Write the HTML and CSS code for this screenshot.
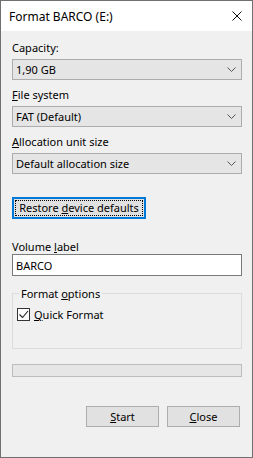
FILE: index.html
```html
<!DOCTYPE html>
<html lang="en">
<head>
    <meta charset="UTF-8">
    <title>Format BARCO (E:)</title>
    <link rel="stylesheet" href="styles.css">
</head>
<body>

    <div class="dialog">
        <!-- Title bar -->
        <div class="titlebar">
            <span class="title">Format BARCO (E:)</span>
            <svg class="close-x" width="10" height="10" viewBox="0 0 10 10">
                <path d="M0.5 0.5 L9.5 9.5 M9.5 0.5 L0.5 9.5" stroke="#111" stroke-width="1"/>
            </svg>
        </div>

        <div class="content">
            <label class="field-label">Capacity:</label>
            <div class="combo">
                <span>1,90 GB</span>
                <svg class="chevron" width="9" height="5" viewBox="0 0 9 5"><path d="M0.5 0.5 L4.5 4.5 L8.5 0.5" fill="none" stroke="#555"/></svg>
            </div>

            <label class="field-label"><u>F</u>ile system</label>
            <div class="combo">
                <span>FAT (Default)</span>
                <svg class="chevron" width="9" height="5" viewBox="0 0 9 5"><path d="M0.5 0.5 L4.5 4.5 L8.5 0.5" fill="none" stroke="#555"/></svg>
            </div>

            <label class="field-label"><u>A</u>llocation unit size</label>
            <div class="combo">
                <span>Default allocation size</span>
                <svg class="chevron" width="9" height="5" viewBox="0 0 9 5"><path d="M0.5 0.5 L4.5 4.5 L8.5 0.5" fill="none" stroke="#555"/></svg>
            </div>

            <div class="restore-row">
                <button class="btn btn-focus"><span class="focus-rect">Restore <u>d</u>evice defaults</span></button>
            </div>

            <label class="field-label">Volume <u>l</u>abel</label>
            <div class="textbox">BARCO</div>

            <fieldset class="group">
                <legend>Format <u>o</u>ptions</legend>
                <div class="check-row">
                    <span class="checkbox">
                        <svg width="11" height="11" viewBox="0 0 11 11"><path d="M1.5 5.5 L4.5 8.5 L10 2" fill="none" stroke="#222" stroke-width="1.1"/></svg>
                    </span>
                    <span><u>Q</u>uick Format</span>
                </div>
            </fieldset>

            <div class="progress"></div>

            <div class="actions">
                <button class="btn btn-action"><u>S</u>tart</button>
                <button class="btn btn-action"><u>C</u>lose</button>
            </div>
        </div>
    </div>

</body>
</html>
```

FILE: styles.css
```css
html, body {
    margin: 0;
    padding: 0;
}

body {
    font-family: "Noto Sans", "Liberation Sans", sans-serif;
    font-size: 11px;
    color: #000;
    width: 253px;
    height: 458px;
}

.dialog {
    box-sizing: border-box;
    width: 253px;
    height: 458px;
    border: 1px solid #707070;
    background-color: #f0f0f0;
    display: flex;
    flex-direction: column;
}

.titlebar {
    height: 30px;
    background-color: #ffffff;
    display: flex;
    align-items: center;
    justify-content: space-between;
    padding: 0 10px 0 8px;
}

.title {
    font-size: 12px;
    color: #000;
}

.close-x {
    display: block;
}

.content {
    display: flex;
    flex-direction: column;
    padding: 9px 10px 0 11px;
}

.field-label {
    display: block;
    line-height: 15px;
    height: 15px;
    margin-bottom: 4px;
}

.combo {
    box-sizing: border-box;
    height: 21px;
    border: 1px solid #adadad;
    background-color: #e5e5e5;
    display: flex;
    align-items: center;
    justify-content: space-between;
    padding: 0 5px 0 3px;
    margin-bottom: 7px;
}

.chevron {
    display: block;
}

.restore-row {
    margin-top: 16px;
    margin-bottom: 20px;
}

.btn {
    font-family: inherit;
    font-size: 11px;
    color: #000;
    background-color: #e1e1e1;
    border: 1px solid #adadad;
    border-radius: 0;
    padding: 0;
    margin: 0;
    box-sizing: border-box;
}

.btn-focus {
    display: block;
    height: 22px;
    width: 134px;
    border: 2px solid #0078d7;
    padding: 1px;
}

.focus-rect {
    display: block;
    height: 16px;
    line-height: 14px;
    box-sizing: border-box;
    border: 1px dotted #000;
    text-align: center;
}

.textbox {
    box-sizing: border-box;
    height: 22px;
    border: 1px solid #7a7a7a;
    background-color: #ffffff;
    display: flex;
    align-items: center;
    padding: 0 3px;
    margin-top: -4px;
}

.group {
    margin: 10px 0 0 0;
    padding: 0 4px 0 4px;
    height: 63px;
    box-sizing: border-box;
    border: 1px solid #dcdcdc;
}

.group legend {
    padding: 0 2px;
    margin-left: 2px;
    line-height: 15px;
}

.check-row {
    display: flex;
    align-items: center;
    gap: 4px;
    margin-top: 6px;
}

.checkbox {
    box-sizing: border-box;
    width: 13px;
    height: 13px;
    border: 1px solid #333;
    background-color: #ffffff;
    display: flex;
    align-items: center;
    justify-content: center;
}

.checkbox svg {
    display: block;
}

.progress {
    box-sizing: border-box;
    height: 13px;
    border: 1px solid #bcbcbc;
    background-color: #e6e6e6;
    margin-top: 15px;
}

.actions {
    display: flex;
    justify-content: flex-end;
    gap: 8px;
    margin-top: 29px;
    padding-right: 2px;
}

.btn-action {
    width: 73px;
    height: 21px;
}
```
